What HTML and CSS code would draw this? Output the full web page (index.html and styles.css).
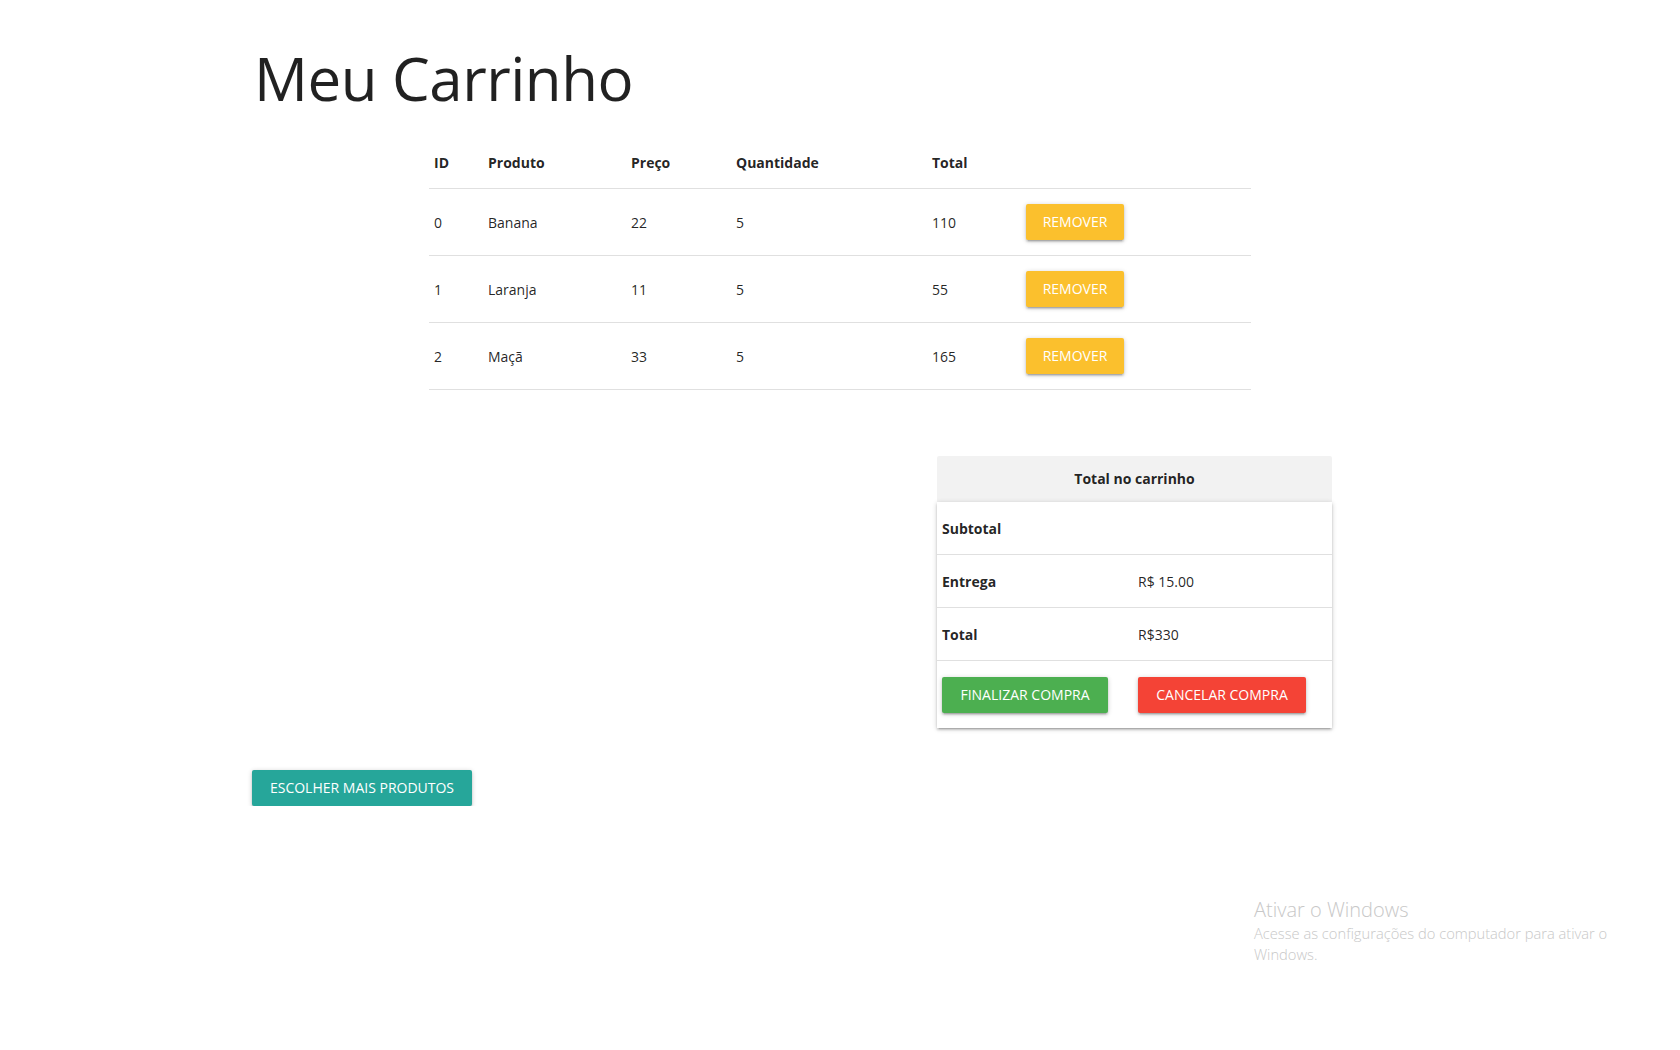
FILE: index.html
```html
<!DOCTYPE html>
<html lang="pt-BR">
<head>
<meta charset="utf-8">
<title>Meu Carrinho</title>
<link rel="stylesheet" href="styles.css">
</head>
<body>
<div class="container">
  <h1 class="title">Meu Carrinho</h1>

  <table class="cart-table">
    <thead>
      <tr>
        <th class="c-id">ID</th>
        <th class="c-prod">Produto</th>
        <th class="c-price">Preço</th>
        <th class="c-qty">Quantidade</th>
        <th class="c-total">Total</th>
        <th class="c-act"></th>
      </tr>
    </thead>
    <tbody>
      <tr>
        <td>0</td><td>Banana</td><td>22</td><td>5</td><td>110</td>
        <td><button class="btn btn-yellow">REMOVER</button></td>
      </tr>
      <tr>
        <td>1</td><td>Laranja</td><td>11</td><td>5</td><td>55</td>
        <td><button class="btn btn-yellow">REMOVER</button></td>
      </tr>
      <tr>
        <td>2</td><td>Maçã</td><td>33</td><td>5</td><td>165</td>
        <td><button class="btn btn-yellow">REMOVER</button></td>
      </tr>
    </tbody>
  </table>

  <div class="summary-wrap">
    <div class="summary">
      <div class="summary-head">Total no carrinho</div>
      <table class="summary-table">
        <tbody>
          <tr><th>Subtotal</th><td></td></tr>
          <tr><th>Entrega</th><td>R$ 15.00</td></tr>
          <tr><th>Total</th><td>R$330</td></tr>
          <tr class="actions">
            <td><button class="btn btn-green">FINALIZAR COMPRA</button></td>
            <td><button class="btn btn-red">CANCELAR COMPRA</button></td>
          </tr>
        </tbody>
      </table>
    </div>
  </div>

  <button class="btn btn-teal">ESCOLHER MAIS PRODUTOS</button>
</div>

<div class="watermark">
  <div class="wm-title">Ativar o Windows</div>
  <div class="wm-text">Acesse as configurações do computador para ativar o Windows.</div>
</div>
</body>
</html>
```

FILE: styles.css
```css
html, body {
  margin: 0;
  padding: 0;
  background: #ffffff;
}

body {
  font-family: "Open Sans", "Noto Sans", sans-serif;
  font-size: 14px;
  color: rgba(0, 0, 0, 0.87);
}

.container {
  width: 1176px;
  margin: 0 auto;
  padding-top: 45px;
}

.title {
  font-weight: 400;
  font-size: 60px;
  line-height: 66px;
  margin: 0 0 25px 2px;
  letter-spacing: -0.5px;
}

.cart-table {
  width: 822px;
  margin: 0 auto;
  border-collapse: collapse;
}

.cart-table th,
.cart-table td {
  text-align: left;
  padding: 0 5px;
  border-bottom: 1px solid #e0e0e0;
  vertical-align: middle;
}

.cart-table th {
  height: 52px;
  font-weight: 700;
}

.cart-table td {
  height: 66px;
}

.c-id { width: 44px; }
.c-prod { width: 133px; }
.c-price { width: 95px; }
.c-qty { width: 186px; }
.c-total { width: 84px; }

.btn {
  font-family: inherit;
  border: none;
  border-radius: 2px;
  height: 36px;
  line-height: 36px;
  padding: 0;
  font-size: 14px;
  color: #ffffff;
  cursor: pointer;
  box-shadow: 0 2px 2px 0 rgba(0, 0, 0, 0.14), 0 3px 1px -2px rgba(0, 0, 0, 0.12), 0 1px 5px 0 rgba(0, 0, 0, 0.2);
}

.btn-yellow { background: #fbc02d; width: 98px; }
.btn-green { background: #4caf50; width: 166px; }
.btn-red { background: #f44336; width: 168px; }
.btn-teal { background: #26a69a; width: 220px; }

.summary-wrap {
  display: flex;
  justify-content: flex-end;
  padding-right: 96px;
  margin-top: 66px;
}

.summary {
  width: 395px;
}

.summary-head {
  background: #f2f2f2;
  height: 46px;
  line-height: 46px;
  text-align: center;
  font-weight: 700;
  border-radius: 2px 2px 0 0;
}

.summary-table {
  width: 100%;
  border-collapse: collapse;
  box-shadow: 0 2px 2px 0 rgba(0, 0, 0, 0.14), 0 3px 1px -2px rgba(0, 0, 0, 0.12), 0 1px 5px 0 rgba(0, 0, 0, 0.2);
}

.summary-table th,
.summary-table td {
  text-align: left;
  padding: 0 5px;
  height: 52px;
  border-bottom: 1px solid #e0e0e0;
  vertical-align: middle;
}

.summary-table th {
  width: 186px;
  font-weight: 700;
}

.summary-table tr.actions td {
  height: 67px;
  border-bottom: none;
}

.btn-teal {
  margin-top: 42px;
}

.watermark {
  position: absolute;
  left: 1254px;
  top: 896px;
  width: 380px;
  color: #c8c8c8;
  font-family: "Open Sans", "Noto Sans", sans-serif;
  font-weight: 300;
}

.wm-title {
  font-size: 20px;
  line-height: 27px;
}

.wm-text {
  font-size: 14.7px;
  line-height: 21px;
}
```
